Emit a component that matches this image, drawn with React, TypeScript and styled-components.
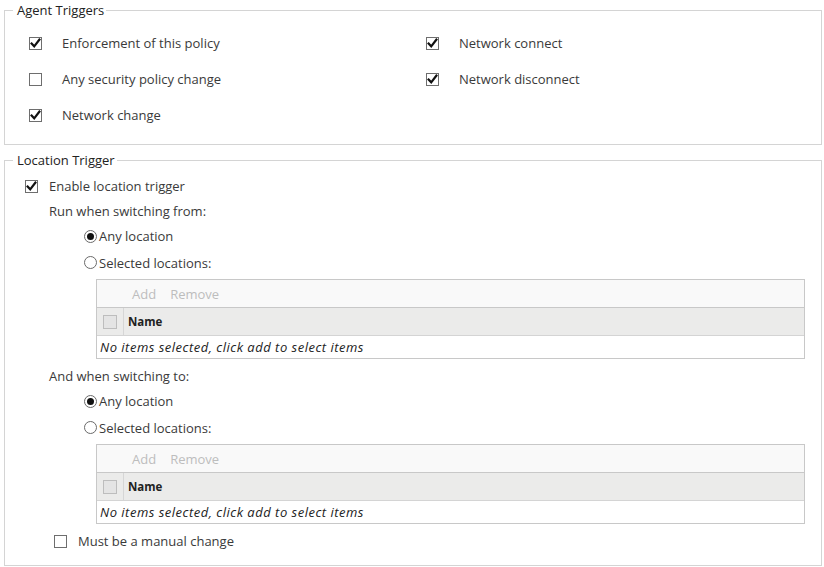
import {FC} from "react";
import styled, {createGlobalStyle} from "styled-components";

const GlobalStyle = createGlobalStyle`
  html, body {
    margin: 0;
    padding: 0;
    background: #fff;
  }
  body {
    font-family: "Open Sans", "Noto Sans", sans-serif;
    font-size: 13px;
    color: #3a3a3a;
  }
`;

const Page = styled.div`
  width: 818px;
  padding: 0 2px 0 4px;
  display: flex;
  flex-direction: column;
  gap: 5px;
`;

const Group = styled.fieldset`
  margin: 0;
  border: 1px solid #d4d4d4;
  padding: 0;
  min-width: 0;
`;

const Legend = styled.legend`
  margin-left: 8px;
  padding: 0 2px 0 4px;
  line-height: 20px;
  color: #222;
`;

const TriggerGrid = styled.div`
  display: grid;
  grid-template-columns: 397px 1fr;
  grid-auto-rows: 36px;
  padding: 5px 0 11px 24px;
`;

const Option = styled.label<{$gap?: number}>`
  display: flex;
  align-items: center;
  gap: ${({$gap}) => $gap ?? 20}px;
  cursor: default;
`;

const Box = styled.span`
  box-sizing: border-box;
  width: 13px;
  height: 13px;
  border: 1px solid #6e6e6e;
  background: #fff;
  display: inline-flex;
  align-items: center;
  justify-content: center;
  flex: none;
`;

const Tick = () => (
  <svg width="11" height="11" viewBox="0 0 11 11">
    <path d="M1.6 5.6 L4.2 8.3 L9.4 1.6" fill="none" stroke="#111" strokeWidth="2.2" strokeLinecap="square"/>
  </svg>
);

const CheckBox: FC<{checked?: boolean}> = ({checked}) => (
  <Box>{checked && <Tick/>}</Box>
);

const Circle = styled.span`
  box-sizing: border-box;
  width: 13px;
  height: 13px;
  border-radius: 50%;
  border: 1px solid #6a6a6a;
  background: #fff;
  display: inline-flex;
  align-items: center;
  justify-content: center;
  flex: none;
`;

const Dot = styled.span`
  width: 7px;
  height: 7px;
  border-radius: 50%;
  background: #111;
`;

const Radio: FC<{checked?: boolean}> = ({checked}) => (
  <Circle>{checked && <Dot/>}</Circle>
);

const LocationBody = styled.div`
  padding: 4px 16px 12px 20px;
  display: flex;
  flex-direction: column;
`;

const Line = styled.div<{$indent?: number; $height?: number}>`
  display: flex;
  align-items: center;
  height: ${({$height}) => $height ?? 24}px;
  padding-left: ${({$indent}) => $indent ?? 0}px;
`;

const Grid = styled.div`
  margin: 3px 0 5px 71px;
  border: 1px solid #c8c8c8;
  display: flex;
  flex-direction: column;
`;

const Toolbar = styled.div`
  height: 27px;
  background: #f9f9f9;
  display: flex;
  align-items: center;
  gap: 14px;
  padding-left: 35px;
  border-bottom: 1px solid #c8c8c8;
  color: #bdbdbd;
`;

const HeaderRow = styled.div`
  height: 27px;
  background: #ebebea;
  display: flex;
  align-items: stretch;
  border-bottom: 1px solid #d4d4d4;
`;

const SelectCell = styled.div`
  width: 26px;
  display: flex;
  align-items: center;
  justify-content: center;
  border-right: 1px solid #d6d6d6;
`;

const GreyBox = styled.span`
  box-sizing: border-box;
  width: 14px;
  height: 14px;
  border: 1px solid #bdbdbd;
  background: #e4e4e4;
`;

const NameHead = styled.div`
  display: flex;
  align-items: center;
  padding-left: 4px;
  font-weight: 700;
  color: #222;
  font-size: 11.5px;
`;

const EmptyRow = styled.div`
  height: 22px;
  display: flex;
  align-items: center;
  padding-left: 3px;
  font-style: italic;
  letter-spacing: 0.5px;
  color: #222;
`;

const LocationGrid: FC = () => (
  <Grid>
    <Toolbar>
      <span>Add</span>
      <span>Remove</span>
    </Toolbar>
    <HeaderRow>
      <SelectCell><GreyBox/></SelectCell>
      <NameHead>Name</NameHead>
    </HeaderRow>
    <EmptyRow>No items selected, click add to select items</EmptyRow>
  </Grid>
);

const triggers = [
  {label: "Enforcement of this policy", checked: true},
  {label: "Network connect", checked: true},
  {label: "Any security policy change", checked: false},
  {label: "Network disconnect", checked: true},
  {label: "Network change", checked: true},
];

const RadioPair: FC = () => (
  <>
    <Line $indent={59} $height={26}>
      <Option $gap={2}><Radio checked/>Any location</Option>
    </Line>
    <Line $indent={59} $height={27}>
      <Option $gap={2}><Radio/>Selected locations:</Option>
    </Line>
  </>
);

const App: FC = () => {
  return (
    <>
      <GlobalStyle/>
      <Page>
        <Group>
          <Legend>Agent Triggers</Legend>
          <TriggerGrid>
            {triggers.map(t => (
              <Option key={t.label}>
                <CheckBox checked={t.checked}/>
                {t.label}
              </Option>
            ))}
          </TriggerGrid>
        </Group>
        <Group>
          <Legend>Location Trigger</Legend>
          <LocationBody>
            <Line>
              <Option $gap={11}><CheckBox checked/>Enable location trigger</Option>
            </Line>
            <Line $indent={24} $height={25}>Run when switching from:</Line>
            <RadioPair/>
            <LocationGrid/>
            <Line $indent={24}>And when switching to:</Line>
            <RadioPair/>
            <LocationGrid/>
            <Line $indent={29}>
              <Option $gap={11}><CheckBox/>Must be a manual change</Option>
            </Line>
          </LocationBody>
        </Group>
      </Page>
    </>
  );
};

export default App;
